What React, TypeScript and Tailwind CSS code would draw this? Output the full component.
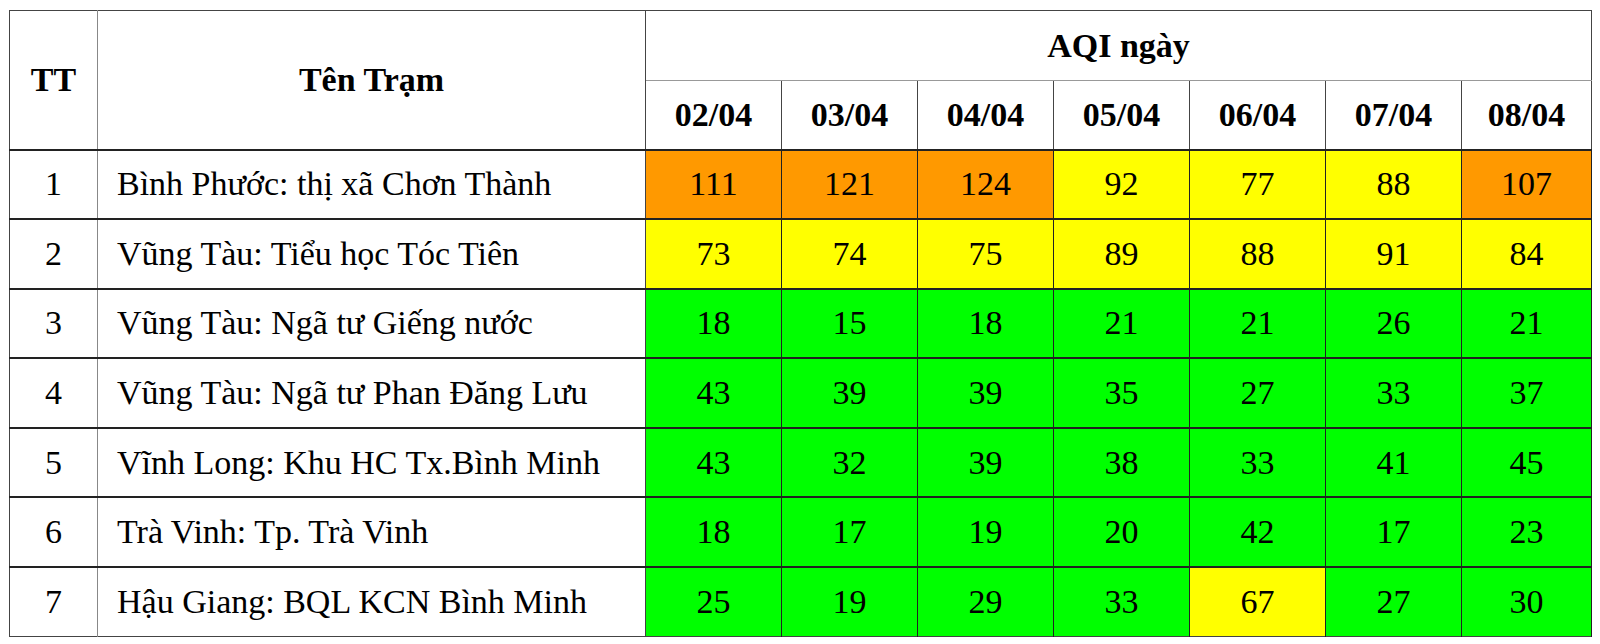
import React from "react"

const dates = ["02/04", "03/04", "04/04", "05/04", "06/04", "07/04", "08/04"]

const rows: { name: string; values: number[] }[] = [
  { name: "Bình Phước: thị xã Chơn Thành", values: [111, 121, 124, 92, 77, 88, 107] },
  { name: "Vũng Tàu: Tiểu học Tóc Tiên", values: [73, 74, 75, 89, 88, 91, 84] },
  { name: "Vũng Tàu: Ngã tư Giếng nước", values: [18, 15, 18, 21, 21, 26, 21] },
  { name: "Vũng Tàu: Ngã tư Phan Đăng Lưu", values: [43, 39, 39, 35, 27, 33, 37] },
  { name: "Vĩnh Long: Khu HC Tx.Bình Minh", values: [43, 32, 39, 38, 33, 41, 45] },
  { name: "Trà Vinh: Tp. Trà Vinh", values: [18, 17, 19, 20, 42, 17, 23] },
  { name: "Hậu Giang: BQL KCN Bình Minh", values: [25, 19, 29, 33, 67, 27, 30] },
]

function aqiColor(v: number) {
  if (v > 100) return "bg-[#ff9900]"
  if (v > 50) return "bg-[#ffff00]"
  return "bg-[#00ff00]"
}

export default function App() {
  return (
    <div className="w-[1600px] h-[644px] bg-white pt-[10px] pl-[9px] font-['Liberation_Serif',serif] text-black text-[34px] leading-none">
      <table className="border-collapse table-fixed w-[1582px] border border-[#444]">
        <colgroup>
          <col className="w-[88px]" />
          <col className="w-[548px]" />
          {dates.map((d, i) => (
            <col key={d} className={i === 6 ? "w-[130px]" : "w-[136px]"} />
          ))}
        </colgroup>
        <thead>
          <tr className="h-[70px]">
            <th rowSpan={2} className="border-r border-[#888] font-bold text-center">
              TT
            </th>
            <th rowSpan={2} className="border-r border-[#444] font-bold text-center">
              Tên Trạm
            </th>
            <th colSpan={7} className="border-b border-[#999] font-bold text-center">
              AQI ngày
            </th>
          </tr>
          <tr className="h-[69px]">
            {dates.map((d) => (
              <th key={d} className="border-r border-[#444] font-bold text-center">
                {d}
              </th>
            ))}
          </tr>
        </thead>
        <tbody>
          {rows.map((r, i) => (
            <tr key={i} className="h-[69.6px]">
              <td className="border-t-2 border-t-[#222] border-r border-r-[#888] text-center">{i + 1}</td>
              <td className="border-t-2 border-t-[#222] border-r border-r-[#444] pl-[19px] whitespace-nowrap">
                {r.name}
              </td>
              {r.values.map((v, j) => (
                <td
                  key={j}
                  className={`border-t-2 border-t-[#222] border-r border-r-[#222] text-center ${aqiColor(v)}`}
                >
                  {v}
                </td>
              ))}
            </tr>
          ))}
        </tbody>
      </table>
    </div>
  )
}
